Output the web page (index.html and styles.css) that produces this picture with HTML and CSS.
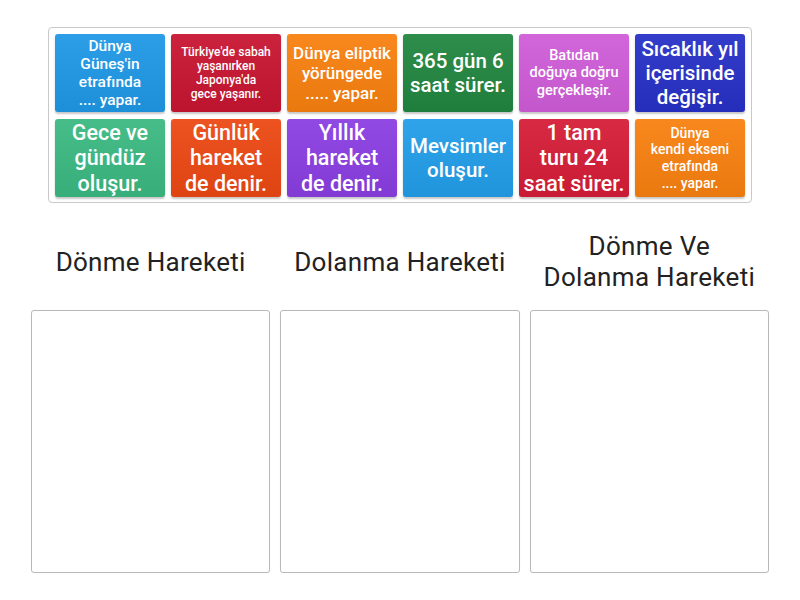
FILE: index.html
```html
<!DOCTYPE html>
<html lang="tr">
<head>
<meta charset="utf-8">
<title>Gruplandırma</title>
<link rel="stylesheet" href="styles.css">
</head>
<body>
<div class="page">
  <div class="tray">
    <div class="card c-blue s15">Dünya<br>Güneş'in<br>etrafında<br>.... yapar.</div>
    <div class="card c-crimson s12">Türkiye'de sabah<br>yaşanırken<br>Japonya'da<br>gece yaşanır.</div>
    <div class="card c-orange s17">Dünya eliptik<br>yörüngede<br>..... yapar.</div>
    <div class="card c-green s20">365 gün 6<br>saat sürer.</div>
    <div class="card c-orchid s14">Batıdan<br>doğuya doğru<br>gerçekleşir.</div>
    <div class="card c-navy s20">Sıcaklık yıl<br>içerisinde<br>değişir.</div>
    <div class="card c-teal s21">Gece ve<br>gündüz<br>oluşur.</div>
    <div class="card c-tomato s21">Günlük<br>hareket<br>de denir.</div>
    <div class="card c-purple s21">Yıllık<br>hareket<br>de denir.</div>
    <div class="card c-sky s20">Mevsimler<br>oluşur.</div>
    <div class="card c-red s21">1 tam<br>turu 24<br>saat sürer.</div>
    <div class="card c-orange s14b">Dünya<br>kendi ekseni<br>etrafında<br>.... yapar.</div>
  </div>
  <div class="groups">
    <div class="group">
      <div class="group-title">Dönme Hareketi</div>
      <div class="drop"></div>
    </div>
    <div class="group">
      <div class="group-title">Dolanma Hareketi</div>
      <div class="drop"></div>
    </div>
    <div class="group">
      <div class="group-title">Dönme Ve<br>Dolanma Hareketi</div>
      <div class="drop"></div>
    </div>
  </div>
</div>
</body>
</html>
```
FILE: styles.css
```css
html, body {
  margin: 0;
  padding: 0;
  background: #ffffff;
}

.page {
  width: 800px;
  height: 600px;
  overflow: hidden;
}

.tray {
  box-sizing: border-box;
  width: 704px;
  margin: 27px 0 0 48px;
  padding: 6px 6px 5px 6px;
  border: 1px solid #c9c9c9;
  border-radius: 4px;
  display: grid;
  grid-template-columns: repeat(6, 110px);
  grid-auto-rows: 78px;
  column-gap: 6px;
  row-gap: 7px;
}

.card {
  display: flex;
  align-items: center;
  justify-content: center;
  text-align: center;
  color: #ffffff;
  font-family: Roboto, "Open Sans", sans-serif;
  font-weight: 500;
  border-radius: 3px;
  box-shadow: 0 2px 2px rgba(0, 0, 0, 0.22);
  background-image: linear-gradient(to bottom, rgba(255, 255, 255, 0.06), rgba(0, 0, 0, 0.06));
}

.s12 { font-size: 12px; line-height: 14.2px; }
.s14 { font-size: 14.5px; line-height: 17.2px; }
.s14b { font-size: 14px; line-height: 16.6px; }
.s15 { font-size: 15.5px; line-height: 18.2px; }
.s17 { font-size: 17px; line-height: 20px; }
.s20 { font-size: 20.5px; line-height: 24.2px; }
.s21 { font-size: 21.5px; line-height: 25.3px; }

.c-blue { background-color: #1f98e6; }
.c-crimson { background-color: #c81531; }
.c-orange { background-color: #f8800f; }
.c-green { background-color: #228640; }
.c-orchid { background-color: #cf5cd8; }
.c-navy { background-color: #2731c6; }
.c-teal { background-color: #3bb981; }
.c-tomato { background-color: #ec4813; }
.c-purple { background-color: #8b3ee2; }
.c-sky { background-color: #229ee9; }
.c-red { background-color: #d51d37; }

.groups {
  display: grid;
  grid-template-columns: repeat(3, 1fr);
  column-gap: 10px;
  padding: 0 31px;
  margin-top: 19px;
}

.group {
  display: flex;
  flex-direction: column;
}

.group-title {
  height: 80px;
  display: flex;
  align-items: center;
  justify-content: center;
  text-align: center;
  font-family: Roboto, "Noto Sans", sans-serif;
  font-weight: 400;
  font-size: 26px;
  line-height: 30.8px;
  letter-spacing: 0.3px;
  color: #222222;
}

.drop {
  box-sizing: border-box;
  margin-top: 8px;
  height: 263px;
  border: 1px solid #b9b9b9;
  border-radius: 3px;
  box-shadow: 0 0 1px rgba(0, 0, 0, 0.08);
}
```
